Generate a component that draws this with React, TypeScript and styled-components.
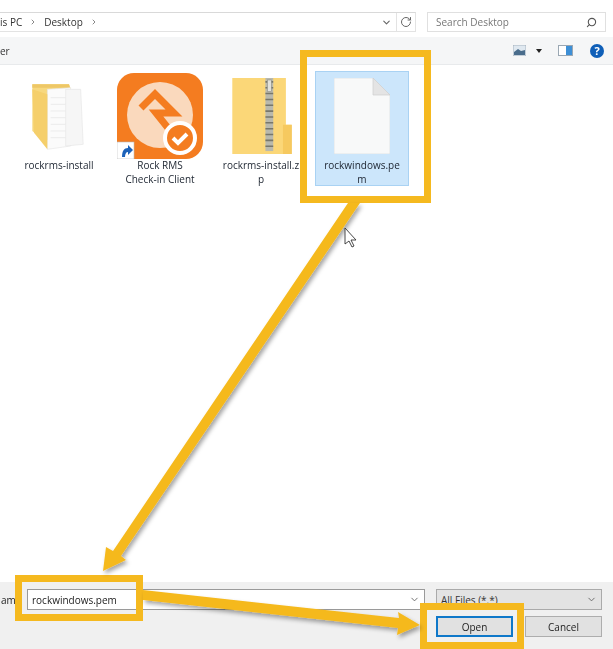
import React from 'react';
import styled, { createGlobalStyle } from 'styled-components';
import { ChevronDown, ChevronRight, RotateCw, Search } from 'lucide-react';

const GlobalStyle = createGlobalStyle`
  html, body {
    margin: 0;
    padding: 0;
    background: #fff;
  }
  body {
    font-family: "Open Sans", "Noto Sans", "Liberation Sans", sans-serif;
    color: #222;
  }
`;

const files = [
  { name: 'rockrms-install', icon: 'folder' },
  { name: 'Rock RMS\nCheck-in Client', icon: 'rock' },
  { name: 'rockrms-install.z\np', icon: 'zip' },
  { name: 'rockwindows.pe\nm', icon: 'file', selected: true }
];

const FolderIcon = () => (
  <svg width="60" height="74" viewBox="0 0 72 84">
    <path d="M4 4h44l2 5 -4 3v66L14 68 4 60z" fill="#f7d87e" />
    <path d="M4 4h44l1 4H4z" fill="#eec766" />
    <path d="M22 10l28 -2v70l-28 4z" fill="#fbfbfb" stroke="#e4e4e4" strokeWidth="0.7" />
    <path d="M44 10l18 0 3 66 -21 2z" fill="#f6f6f6" stroke="#e4e4e4" strokeWidth="0.7" />
    <path d="M26 20h18M26 28h18M26 36h18M26 44h18M26 52h18M26 60h18M26 68h18" stroke="#e8e8e8" strokeWidth="1" />
    <path d="M4 10l18 6v66L6 62z" fill="#f5cf6b" />
  </svg>
);

const RockIcon = () => (
  <svg width="86" height="86" viewBox="0 0 86 86">
    <rect width="86" height="86" rx="17" fill="#f47c20" />
    <circle cx="43" cy="42" r="33" fill="#fad9bd" />
    <path d="M24 35L38 21 57 40H39L55 60" fill="none" stroke="#f47c20" strokeWidth="7" />
    <circle cx="63" cy="65" r="15" fill="#f47c20" stroke="#fff" strokeWidth="4" />
    <path d="M56 65l5 5 9 -9" fill="none" stroke="#fff" strokeWidth="4" />
    <rect x="0" y="69" width="17" height="17" fill="#fff" stroke="#bbb" strokeWidth="0.6" />
    <path d="M5 84c0 -6 2 -9 6 -9v-3l5 5 -5 5v-3c-2 0 -3 2 -3 5z" fill="#1c62b9" />
  </svg>
);

const ZipIcon = () => (
  <ZipSvg width="61" height="76" viewBox="0 0 62 78">
    <path d="M0 0h55v48h6v30H0z" fill="#fbd778" />
    <path d="M52 48h9v30h-9z" fill="#f6c95f" />
    <rect x="34" y="0" width="8" height="75" fill="#b9b9ad" />
    <path d="M34 4h8M34 10h8M34 16h8M34 22h8M34 28h8M34 34h8M34 40h8M34 46h8M34 52h8M34 58h8M34 64h8M34 70h8" stroke="#77776b" strokeWidth="1.6" />
    <rect x="36" y="2" width="4" height="12" fill="#e2e2dc" stroke="#8b8b80" strokeWidth="0.6" />
  </ZipSvg>
);

const FileIcon = () => (
  <svg width="56" height="76" viewBox="0 0 56 76">
    <path d="M0 0h39l17 17v59H0z" fill="#f8f9f9" stroke="#d9dde0" strokeWidth="0.7" />
    <path d="M39 0l17 17H39z" fill="#e4e4e4" stroke="#cfcfcf" strokeWidth="0.7" />
  </svg>
);

const icons: Record<string, React.ReactNode> = {
  folder: <FolderIcon />,
  rock: <RockIcon />,
  zip: <ZipIcon />,
  file: <FileIcon />
};

const App: React.FC = () => {
  return (
    <Page>
      <GlobalStyle />
      <Dialog>
        <AddressRow>
          <AddressBar>
            <Crumb>is PC</Crumb>
            <ChevronRight size={8} strokeWidth={3} color="#888" />
            <Crumb>Desktop</Crumb>
            <ChevronRight size={8} strokeWidth={3} color="#888" />
            <AddressEnd>
              <ChevronDown size={11} strokeWidth={2.4} color="#666" />
              <RefreshBox>
                <RotateCw size={12} color="#666" />
              </RefreshBox>
            </AddressEnd>
          </AddressBar>
          <SearchBox>
            Search Desktop
            <Search size={11} strokeWidth={2.4} color="#555" style={{ transform: 'scaleX(-1)' }} />
          </SearchBox>
        </AddressRow>

        <Toolbar>
          <ToolLabel>er</ToolLabel>
          <ToolIcons>
            <svg width="13" height="11" viewBox="0 0 13 11">
              <rect width="13" height="11" fill="#dfe8f0" stroke="#9aa7b3" strokeWidth="0.8" />
              <path d="M1 7l4 -3 3 2 4 -1v5H1z" fill="#4a6d8c" />
            </svg>
            <Caret />
            <svg width="15" height="11" viewBox="0 0 15 11">
              <rect x="0.5" y="0.5" width="14" height="10" fill="#fff" stroke="#9aa7b3" />
              <rect x="8" y="1" width="6" height="9" fill="#3d8fd6" />
            </svg>
            <HelpIcon>?</HelpIcon>
          </ToolIcons>
        </Toolbar>

        <FileGrid>
          {files.map(file => (
            <FileItem key={file.name} $selected={file.selected}>
              <IconSlot>{icons[file.icon]}</IconSlot>
              <FileName>{file.name}</FileName>
            </FileItem>
          ))}
        </FileGrid>

        <BottomPanel>
          <NameRow>
            <NameLabel>am</NameLabel>
            <NameInput>
              rockwindows.pem
              <ChevronDown size={11} strokeWidth={2} color="#666" />
            </NameInput>
            <FilterSelect>
              All Files (*.*)
              <ChevronDown size={11} strokeWidth={2} color="#666" />
            </FilterSelect>
          </NameRow>
          <ButtonRow>
            <DialogButton $primary>Open</DialogButton>
            <DialogButton>Cancel</DialogButton>
          </ButtonRow>
        </BottomPanel>
      </Dialog>

      <PemHighlight />
      <NameHighlight />
      <OpenHighlight />
      <Arrows width="613" height="649" viewBox="0 0 613 649">
        <defs>
          <filter id="arrowShadow" x="-10%" y="-10%" width="120%" height="120%">
            <feDropShadow dx="2" dy="3" stdDeviation="2" floodColor="#000" floodOpacity="0.35" />
          </filter>
        </defs>
        <g fill="#f5b91f" filter="url(#arrowShadow)">
          <path d="M348 203H360L121 556 126 560 103 571 106 547 113 551z" />
          <path d="M143 590L399 618 398 612 420 625 397 635 398 628 143 600z" />
        </g>
        <path d="M345 228v16l4 -3 3 6 2 -1 -3 -6h5z" fill="#fff" stroke="#333" strokeWidth="0.9" />
      </Arrows>
    </Page>
  );
};

// Styled Components

const Page = styled.div`
  position: relative;
  width: 613px;
  height: 649px;
  overflow: hidden;
  background: #fff;
  font-size: 10px;
`;

const Dialog = styled.div`
  height: 100%;
  display: flex;
  flex-direction: column;
  filter: blur(0.3px);
`;

const AddressRow = styled.div`
  display: flex;
  gap: 11px;
  height: 20px;
  margin-top: 12px;
  padding-right: 7px;
`;

const AddressBar = styled.div`
  flex: 0 0 416px;
  display: flex;
  align-items: center;
  gap: 7px;
  box-sizing: border-box;
  border-top: 1px solid #d9d9d9;
  border-bottom: 1px solid #e3e3e3;
  border-right: 1px solid #e3e3e3;
  color: #333;
`;

const Crumb = styled.span`
  white-space: nowrap;
`;

const AddressEnd = styled.div`
  margin-left: auto;
  display: flex;
  align-items: center;
  gap: 4px;
  height: 100%;
`;

const RefreshBox = styled.div`
  width: 18px;
  height: 100%;
  display: flex;
  align-items: center;
  justify-content: center;
  border-left: 1px solid #e3e3e3;
`;

const SearchBox = styled.div`
  flex: 1;
  display: flex;
  align-items: center;
  justify-content: space-between;
  box-sizing: border-box;
  padding: 0 8px;
  border: 1px solid #e0e0e0;
  color: #777;
`;

const Toolbar = styled.div`
  display: flex;
  align-items: center;
  justify-content: space-between;
  box-sizing: border-box;
  height: 28px;
  margin-top: 5px;
  padding-right: 9px;
  background: #f5f6f7;
  border-bottom: 1px solid #e8eaec;
`;

const ToolLabel = styled.span`
  color: #333;
`;

const ToolIcons = styled.div`
  display: flex;
  align-items: center;
`;

const Caret = styled.span`
  width: 0;
  height: 0;
  margin: 0 16px 0 10px;
  border-left: 3.5px solid transparent;
  border-right: 3.5px solid transparent;
  border-top: 4px solid #222;
`;

const HelpIcon = styled.span`
  display: flex;
  align-items: center;
  justify-content: center;
  width: 14px;
  height: 14px;
  margin-left: 17px;
  border-radius: 50%;
  background: #0f5fb8;
  color: #fff;
  font-size: 11px;
  font-weight: 700;
`;

const FileGrid = styled.div`
  flex: 1;
  display: grid;
  grid-template-columns: repeat(4, 94px);
  grid-template-rows: 115px;
  column-gap: 7px;
  box-sizing: border-box;
  padding: 6px 0 0 12px;
`;

const FileItem = styled.div<{ $selected?: boolean }>`
  display: flex;
  flex-direction: column;
  align-items: center;
  box-sizing: border-box;
  border: 1px solid ${({ $selected }) => ($selected ? '#a9d2f3' : 'transparent')};
  background: ${({ $selected }) => ($selected ? '#cce6fb' : 'transparent')};
`;

const IconSlot = styled.div`
  height: 87px;
  display: flex;
  align-items: center;
  justify-content: center;
  flex-shrink: 0;
`;

const ZipSvg = styled.svg`
  margin-left: 3px;
`;

const FileName = styled.div`
  width: 100%;
  text-align: center;
  white-space: pre-line;
  line-height: 13.5px;
  color: #1c2430;
`;

const BottomPanel = styled.div`
  display: flex;
  flex-direction: column;
  box-sizing: border-box;
  height: 67px;
  padding: 7px 11px 0 0;
  background: #f0f0f0;
`;

const NameRow = styled.div`
  display: flex;
  align-items: center;
  height: 21px;
`;

const NameLabel = styled.span`
  width: 26px;
  margin-left: 1px;
  color: #222;
`;

const NameInput = styled.div`
  width: 398px;
  height: 100%;
  display: flex;
  align-items: center;
  justify-content: space-between;
  box-sizing: border-box;
  padding: 0 4px;
  background: #fff;
  border: 1px solid #9a9a9a;
  color: #222;
`;

const FilterSelect = styled.div`
  flex: 1;
  height: 100%;
  display: flex;
  align-items: center;
  justify-content: space-between;
  box-sizing: border-box;
  margin-left: 11px;
  padding: 0 4px;
  background: #e3e3e3;
  border: 1px solid #aaa;
  color: #333;
`;

const ButtonRow = styled.div`
  display: flex;
  justify-content: flex-end;
  gap: 12px;
  margin-top: 6px;
`;

const DialogButton = styled.button<{ $primary?: boolean }>`
  width: 77px;
  height: 21px;
  padding: 0;
  font: inherit;
  color: #222;
  background: #e1e1e1;
  border: ${({ $primary }) => ($primary ? '2px solid #0f78c9' : '1px solid #adadad')};
`;

const Highlight = styled.div`
  position: absolute;
  box-sizing: border-box;
  border: 7px solid #f5b91f;
`;

const PemHighlight = styled(Highlight)`
  left: 300px;
  top: 50px;
  width: 131px;
  height: 153px;
`;

const NameHighlight = styled(Highlight)`
  left: 15px;
  top: 575px;
  width: 128px;
  height: 46px;
`;

const OpenHighlight = styled(Highlight)`
  left: 420px;
  top: 603px;
  width: 104px;
  height: 46px;
`;

const Arrows = styled.svg`
  position: absolute;
  left: 0;
  top: 0;
  pointer-events: none;
`;

export default App;
